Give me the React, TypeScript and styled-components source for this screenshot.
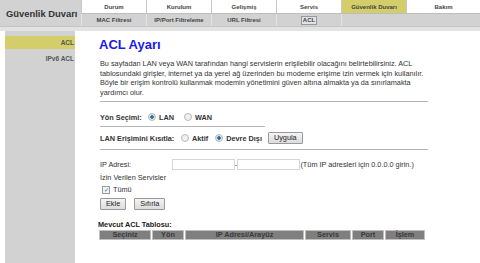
import React from 'react';
import styled, { createGlobalStyle } from 'styled-components';

const GlobalStyle = createGlobalStyle`
  html, body {
    margin: 0;
    padding: 0;
    background: #ffffff;
  }
  body {
    font-family: "Liberation Sans", Arial, sans-serif;
  }
`;

const Page = styled.div`
  width: 480px;
  height: 263px;
  overflow: hidden;
  display: flex;
  flex-direction: column;
  background: #ffffff;
`;

const Header = styled.div`
  display: grid;
  grid-template-columns: 81px 1fr;
  background: #d2d2d2;
`;

const TitleBox = styled.div`
  grid-row: span 2;
  display: flex;
  align-items: center;
  padding-left: 6px;
  font-size: 9.4px;
  font-weight: bold;
  white-space: nowrap;
  overflow: hidden;
  color: #333;
  background: #d2d2d2;
`;

const TabRow = styled.div`
  display: grid;
  grid-template-columns: repeat(5, 65px) 1fr;
  height: 13px;
  background: #ffffff;
  border-bottom: 1px solid #bdbdbd;
`;

const Tab = styled.div<{ $active?: boolean }>`
  display: flex;
  align-items: center;
  justify-content: center;
  font-size: 6px;
  font-weight: bold;
  color: #444;
  white-space: nowrap;
  background: ${p => (p.$active ? '#d3ce69' : '#ffffff')};
  border-left: 1px solid #c8c8c8;
`;

const SubRow = styled.div`
  display: grid;
  grid-template-columns: repeat(4, 65px) 1fr;
  height: 12px;
  background: #d2d2d2;
`;

const SubTab = styled.div`
  display: flex;
  align-items: center;
  justify-content: center;
  font-size: 6px;
  font-weight: bold;
  color: #444;
  white-space: nowrap;
  border-left: 1px solid #e4e4e4;
`;

const ActiveSub = styled.span`
  border: 1px solid #999;
  background: #e2e2e2;
  padding: 0 1px;
  line-height: 7px;
`;

const Band = styled.div`
  height: 4px;
  background: #e3e3e3;
  border-top: 1px solid #c4c4c4;
`;

const Body = styled.div`
  flex: 1;
  display: flex;
  min-height: 0;
`;

const Sidebar = styled.div`
  width: 70px;
  margin-left: 5px;
  padding-top: 5px;
  background: #d2d2d2;
  display: flex;
  flex-direction: column;
  gap: 3px;
`;

const SideItem = styled.div<{ $active?: boolean }>`
  height: 13px;
  display: flex;
  align-items: center;
  justify-content: flex-end;
  padding-right: 1px;
  font-size: 6.5px;
  font-weight: bold;
  color: #555;
  background: ${p => (p.$active ? '#d3ce69' : 'transparent')};
`;

const Main = styled.div`
  flex: 1;
  padding: 6px 0 0 23px;
  color: #333;
  font-size: 7.3px;
`;

const Heading = styled.h1`
  margin: 0 0 7px 1px;
  font-size: 13px;
  line-height: 15px;
  font-weight: bold;
  color: #1919f0;
`;

const Intro = styled.p`
  margin: 0 0 0 2px;
  width: 332px;
  line-height: 9.7px;
`;

const Rule = styled.hr<{ $short?: boolean; $mt: number }>`
  margin: ${p => p.$mt}px 0 0 2px;
  width: ${p => (p.$short ? '165px' : '328px')};
  border: 0;
  border-top: 1px solid #b5b5b5;
  height: 0;
`;

const FormRow = styled.div<{ $mt: number }>`
  display: flex;
  align-items: center;
  margin-left: 2px;
  height: 13px;
  margin-top: ${p => p.$mt}px;
`;

const Label = styled.span<{ $w?: number }>`
  font-weight: bold;
  width: ${p => (p.$w ? `${p.$w}px` : 'auto')};
`;

const RadioLabel = styled.label<{ $gap?: number }>`
  display: flex;
  align-items: center;
  gap: 3px;
  font-weight: bold;
  margin-right: ${p => p.$gap ?? 9}px;
`;

const RadioDot = styled.span<{ $on?: boolean }>`
  width: 6px;
  height: 6px;
  border-radius: 50%;
  border: 1px solid #b9b9b9;
  background: ${p => (p.$on ? 'radial-gradient(circle, #2f6f9c 0 1.5px, #d8e6ef 2px)' : '#f0f0f0')};
`;

const Button = styled.button`
  font-family: "Liberation Sans", Arial, sans-serif;
  font-size: 7.3px;
  color: #222;
  height: 12px;
  padding: 0 5px;
  background: linear-gradient(#f4f4f4, #dcdcdc);
  border: 1px solid #9a9a9a;
  border-radius: 1px;
  line-height: 10px;
`;

const PlainRow = styled.div<{ $mt?: number }>`
  display: flex;
  align-items: center;
  margin-left: 2px;
  margin-top: ${p => p.$mt ?? 0}px;
  height: 12px;
`;

const FieldLabel = styled.span`
  width: 72px;
`;

const TextInput = styled.div`
  width: 61px;
  height: 9px;
  border: 1px solid #d6d6d6;
  background: #fff;
`;

const CheckBox = styled.span`
  width: 6px;
  height: 6px;
  border: 1px solid #9a9a9a;
  background: #f2f2f2;
  margin: 0 3px 0 2px;
  display: flex;
  align-items: center;
  justify-content: center;
  font-size: 6px;
  color: #2a5fa0;
  line-height: 6px;
`;

const ButtonRow = styled.div`
  display: flex;
  gap: 8px;
  margin: 2px 0 0 2px;
`;

const TableTitle = styled.div`
  margin-top: 10px;
  font-weight: bold;
  color: #222;
  line-height: 9px;
`;

const Table = styled.table`
  border-collapse: separate;
  border-spacing: 1px;
  margin-top: 0;
  background: #fff;
`;

const Th = styled.th<{ $w: number }>`
  width: ${p => p.$w}px;
  height: 8px;
  padding: 0;
  background: #7f7f7f;
  border: 1px solid #c0c0c0;
  color: #3a3a3a;
  font-size: 7.3px;
  font-weight: bold;
  line-height: 8px;
`;

const columns = [
  { label: 'Seçiniz', w: 50 },
  { label: 'Yön', w: 30 },
  { label: 'IP Adresi/Arayüz', w: 117 },
  { label: 'Servis', w: 44 },
  { label: 'Port', w: 30 },
  { label: 'İşlem', w: 38 },
];

const tabs = ['Durum', 'Kurulum', 'Gelişmiş', 'Servis', 'Güvenlik Duvarı', 'Bakım'];
const subTabs = ['MAC Filtresi', 'IP/Port Filtreleme', 'URL Filtresi'];

export default function App() {
  return (
    <Page>
      <GlobalStyle />
      <Header>
        <TitleBox>Güvenlik Duvarı</TitleBox>
        <TabRow>
          {tabs.map(t => (
            <Tab key={t} $active={t === 'Güvenlik Duvarı'}>{t}</Tab>
          ))}
        </TabRow>
        <SubRow>
          {subTabs.map(t => (
            <SubTab key={t}>{t}</SubTab>
          ))}
          <SubTab><ActiveSub>ACL</ActiveSub></SubTab>
          <SubTab />
        </SubRow>
      </Header>
      <Band />
      <Body>
        <Sidebar>
          <SideItem $active>ACL</SideItem>
          <SideItem>IPv6 ACL</SideItem>
        </Sidebar>
        <Main>
          <Heading>ACL Ayarı</Heading>
          <Intro>
            Bu sayfadan LAN veya WAN tarafından hangi servislerin erişilebilir olacağını belirtebilirsiniz. ACL
            tablosundaki girişler, internet ya da yerel ağ üzerinden bu modeme erişime izin vermek için kullanılır.
            Böyle bir erişim kontrolü kullanmak modemin yönetimini güven altına almakta ya da sınırlamakta
            yardımcı olur.
          </Intro>
          <Rule $mt={3} />
          <FormRow $mt={9}>
            <Label $w={48}>Yön Seçimi:</Label>
            <RadioLabel $gap={10}><RadioDot $on />LAN</RadioLabel>
            <RadioLabel><RadioDot />WAN</RadioLabel>
          </FormRow>
          <Rule $short $mt={2} />
          <FormRow $mt={5}>
            <Label $w={81}>LAN Erişimini Kısıtla:</Label>
            <RadioLabel $gap={7}><RadioDot />Aktif</RadioLabel>
            <RadioLabel $gap={6}><RadioDot $on />Devre Dışı</RadioLabel>
            <Button>Uygula</Button>
          </FormRow>
          <Rule $mt={4} />
          <PlainRow $mt={9}>
            <FieldLabel>IP Adresi:</FieldLabel>
            <TextInput />
            <span>-</span>
            <TextInput />
            <span>(Tüm IP adresleri için 0.0.0.0 girin.)</span>
          </PlainRow>
          <PlainRow $mt={1}>İzin Verilen Servisler</PlainRow>
          <PlainRow>
            <CheckBox>✓</CheckBox>Tümü
          </PlainRow>
          <ButtonRow>
            <Button>Ekle</Button>
            <Button>Sıfırla</Button>
          </ButtonRow>
          <TableTitle>Mevcut ACL Tablosu:</TableTitle>
          <Table>
            <thead>
              <tr>
                {columns.map(c => (
                  <Th key={c.label} $w={c.w}>{c.label}</Th>
                ))}
              </tr>
            </thead>
          </Table>
        </Main>
      </Body>
    </Page>
  );
}
